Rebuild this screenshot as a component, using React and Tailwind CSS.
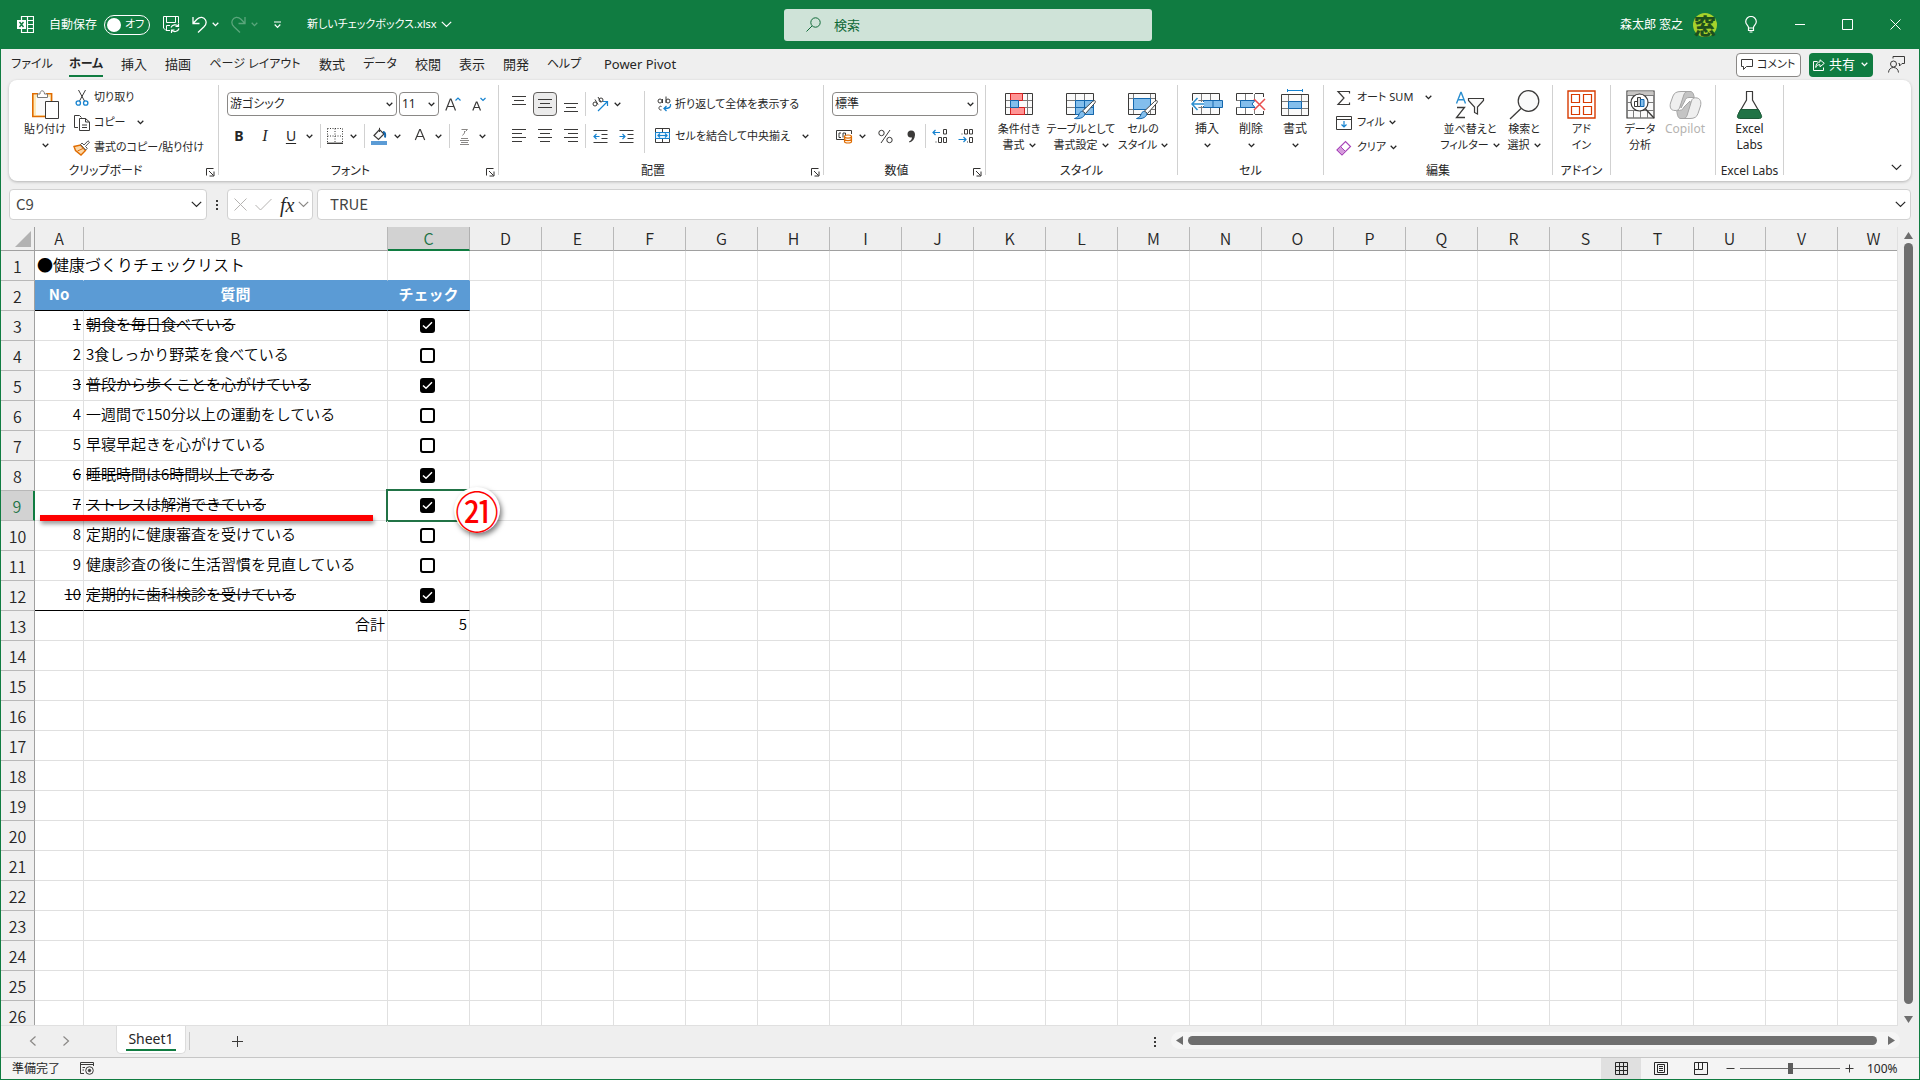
import React from "react";

const UI = "font-['Noto_Sans','Noto_Sans_CJK_JP',sans-serif] [font-feature-settings:'palt']";
const SHEET = "font-['Noto_Sans_CJK_JP',sans-serif] [font-feature-settings:normal]";

/* ---------- small shared pieces ---------- */

function Svg({ w, h, children, className = "", stroke = "#3b3a39" }) {
  return (
    <svg
      width={w}
      height={h}
      viewBox={`0 0 ${w} ${h}`}
      fill="none"
      stroke={stroke}
      className={`shrink-0 ${className}`}
      aria-hidden="true"
    >
      {children}
    </svg>
  );
}

function Chevron({ className = "" }) {
  return (
    <svg width="7" height="5" viewBox="0 0 7 5" fill="none" stroke="currentColor" strokeWidth="1.3" className={`shrink-0 ${className}`} aria-hidden="true">
      <path d="M0.7 0.8 3.5 3.6 6.3 0.8" />
    </svg>
  );
}

function WideChevron({ className = "" }) {
  return (
    <svg width="11" height="7" viewBox="0 0 11 7" fill="none" stroke="currentColor" strokeWidth="1.2" className={`shrink-0 ${className}`} aria-hidden="true">
      <path d="M0.8 0.8 5.5 5.5 10.2 0.8" />
    </svg>
  );
}

function Launcher({ label }) {
  return (
    <button type="button" aria-label={label} className="flex h-3 w-4 items-end pl-1">
      <Svg w={9} h={9} stroke="#323130">
        <path d="M0.5 7.5V0.5H7.5M3 3 7.5 7.5M8 3.5V8H3.5" />
      </Svg>
    </button>
  );
}

function Group({ label, width, launcher, children }) {
  return (
    <section aria-label={label || "分析"} className={`flex h-[90px] shrink-0 flex-col border-r border-[#d1d1d1] ${width}`}>
      <div className="flex h-20 shrink-0">{children}</div>
      <div className="flex h-3 shrink-0 items-center">
        <div className="flex-1 whitespace-nowrap text-center text-xs leading-[14px]">{label}</div>
        {launcher && <Launcher label={`${label}の設定`} />}
      </div>
    </section>
  );
}

function Tool({ label, children, className = "w-6" }) {
  return (
    <button type="button" aria-label={label} className={`flex h-6 shrink-0 items-center justify-center ${className}`}>
      {children}
    </button>
  );
}

function Sep({ className = "h-6" }) {
  return <div className={`w-px shrink-0 bg-[#d1d1d1] ${className}`} />;
}

function Big({ icon, lines, chevron, chevronBelow, width, disabled, size = "text-xs leading-4" }) {
  return (
    <button
      type="button"
      disabled={disabled}
      className={`flex shrink-0 flex-col items-center whitespace-nowrap pt-[3px] disabled:text-[#b5b3b1] ${size} ${width}`}
    >
      <span className="flex h-[33px] items-center justify-center">{icon}</span>
      {lines.map((t, i) => (
        <span key={t} className="flex items-center gap-1">
          {t}
          {chevron && i === lines.length - 1 && <Chevron />}
        </span>
      ))}
      {chevronBelow && (
        <span className="flex h-4 items-center">
          <Chevron />
        </span>
      )}
    </button>
  );
}

const TIGHT = "text-[11px] leading-4";

function Row({ icon, label, chevron, gap = "ml-1" }) {
  return (
    <button type="button" className="flex h-[25px] items-center whitespace-nowrap text-[11px]">
      <span className="flex w-[21px] items-center">{icon}</span>
      {label}
      {chevron && <Chevron className={gap} />}
    </button>
  );
}

function Combo({ label, value, width }) {
  return (
    <label className={`relative flex h-6 shrink-0 items-center rounded border border-[#8a8886] bg-white ${width}`}>
      <span className="sr-only">{label}</span>
      <select className="h-full w-full appearance-none bg-transparent pl-0.5 text-xs leading-5 outline-none">
        <option>{value}</option>
      </select>
      <Chevron className="pointer-events-none absolute right-[3px]" />
    </label>
  );
}

/* ---------- ribbon icons ---------- */

const PasteIcon = () => (
  <Svg w={30} h={31}>
    <path d="M3 5.5H22V27.5H3Z" fill="#fde9b8" stroke="none" />
    <path d="M6 8H20V26H6Z" fill="#fafafa" stroke="none" />
    <path d="M15 27.5H2.8V4.8H8M16 4.8H21.6V12" stroke="#e06c00" strokeWidth="1.6" />
    <path d="M7.5 8.5V5H10C10 2.8 11 1.8 12.2 1.8S14.5 2.8 14.5 5H17.5V8.5Z" fill="#fff" stroke="#7a7a7a" />
    <path d="M15.5 12.5H28.5V29.5H15.5Z" fill="#fff" />
  </Svg>
);

const CutIcon = () => (
  <Svg w={18} h={18}>
    <path d="M5.5 1 11.5 12M12.5 1 6.5 12" />
    <circle cx="5.3" cy="14" r="2.2" stroke="#1683d0" strokeWidth="1.3" />
    <circle cx="12.7" cy="14" r="2.2" stroke="#1683d0" strokeWidth="1.3" />
  </Svg>
);

const CopyIcon = () => (
  <Svg w={18} h={18}>
    <path d="M5 13.5H1.5V1.5H6.5L8.5 3.5M6.5 4.5H12.5L16.5 8V16.5H6.5ZM12.5 4.5V8H16.5M9 11H14M9 13.5H14" />
  </Svg>
);

const PainterIcon = () => (
  <Svg w={18} h={17}>
    <path d="M1 7.5 7.5 6 12.5 11.5 8 16 2.5 11.5Z" fill="#fbd7a8" stroke="#e06c00" strokeWidth="1.4" />
    <path d="M4.5 12 10 9.5" stroke="#e06c00" />
    <path d="M7.5 5.5 9 4 11 6 15 1.8 16.5 3.2 12.5 7.5 14.3 9.3 12.7 11Z" fill="#fff" stroke="#555" />
  </Svg>
);

const Lines = ({ w = 16, rows }) => (
  <Svg w={w} h={16}>
    <path d={rows.map(([x1, x2, y]) => `M${x1} ${y}H${x2}`).join("")} strokeWidth="1" />
  </Svg>
);

const TableBase = () => (
  <>
    <path d="M1.5 4.5H28.5V25.5H1.5Z" fill="#fafafa" stroke="#3b3a39" />
    <path d="M2 11.5H28M2 18.5H28M10.5 5V25M19.5 5V25" stroke="#7a7a7a" />
  </>
);

const Brush = () => (
  <>
    <path d="M14 25.5C15 22 18 21.5 20 23.5 20.5 27.5 16 30.5 9.5 29.5 12 28.8 13.2 27.8 14 25.5Z" fill="#83beec" stroke="#1467ad" />
    <path d="M17.5 22 27.5 12.5C30 10.8 31.2 11.8 29.8 14L20.5 24.5Z" fill="#fff" stroke="#444" />
  </>
);

const CondIcon = () => (
  <Svg w={30} h={31}>
    <path d="M1.5 4.5H28.5V25.5H1.5Z" fill="#fafafa" />
    <path d="M2 11.5H28M2 18.5H28M6.5 5V25M23.5 5V25" stroke="#7a7a7a" />
    <path d="M6.5 4.5H18.5V11.5H6.5ZM6.5 18.5H20.5V25.5H6.5Z" fill="#ff9494" stroke="#d62020" />
    <path d="M6.5 11.5H14.5V18.5H6.5Z" fill="#83beec" stroke="#1467ad" />
  </Svg>
);

const FormatTableIcon = () => (
  <Svg w={32} h={31}>
    <TableBase />
    <path d="M10.5 11.5H28.5V25.5H10.5Z" fill="#83beec" stroke="#1467ad" />
    <path d="M10.5 18.5H28M19.5 12V25" stroke="#1467ad" />
    <Brush />
  </Svg>
);

const CellStyleIcon = () => (
  <Svg w={32} h={31}>
    <path d="M1.5 4.5H28.5V25.5H1.5Z" fill="#fafafa" />
    <path d="M2 9.5H28M2 20.5H28M6.5 5V25M23.5 5V25" stroke="#7a7a7a" />
    <path d="M6.5 9.5H23.5V20.5H6.5Z" fill="#83beec" stroke="#1467ad" />
    <Brush />
  </Svg>
);

const InsertIcon = () => (
  <Svg w={33} h={31}>
    <TableBase />
    <path d="M12.5 11.5H31.5V18.5H12.5ZM22 11.5V18.5" fill="#83beec" stroke="#1467ad" />
    <path d="M1 15H13M6.5 9.5 1 15 6.5 20.5" stroke="#fff" strokeWidth="4" />
    <path d="M1 15H13M6.5 9 1 15 6.5 21" stroke="#2b8fd0" strokeWidth="1.6" />
  </Svg>
);

const DeleteIcon = () => (
  <Svg w={32} h={31}>
    <path d="M18 4.5H1.5V11.5H6M6 18.5H1.5V25.5H18M28.5 8V4.5H20M28.5 22V25.5H20" />
    <path d="M2 11.5H20M2 18.5H20M10.5 5V25M19.5 5V10M19.5 20V25" stroke="#7a7a7a" />
    <path d="M5.5 11.5H20L17 15 20 18.5H5.5Z" fill="#83beec" stroke="#1467ad" />
    <path d="M19 10 30 21M30 10 19 21" stroke="#e94f4f" strokeWidth="1.5" />
  </Svg>
);

const FormatIcon = () => (
  <Svg w={30} h={33}>
    <path d="M1.5 6.5H28.5V27.5H1.5Z" fill="#fafafa" />
    <path d="M2 13.5H28M2 20.5H28M8.5 7V27M21.5 7V27" stroke="#7a7a7a" />
    <path d="M8.5 13.5H21.5V20.5H8.5Z" fill="#83beec" stroke="#1467ad" />
    <path d="M7.5 2.5H22.5M7.5 1V4M22.5 1V4" stroke="#1683d0" />
  </Svg>
);

const SortIcon = () => (
  <Svg w={30} h={30}>
    <path d="M1.5 13.5 5.8 2.5H6.2L10.5 13.5M3 9.8H9" stroke="#2b8fd0" strokeWidth="1.4" />
    <path d="M2 17.5H9.5L1.5 27.5H10" strokeWidth="1.3" />
    <path d="M13.5 8.5H28.5V10.5L22.5 17V24L19.5 22.5V17L13.5 10.5Z" fill="#fafafa" strokeWidth="1.2" />
  </Svg>
);

const FindIcon = () => (
  <Svg w={31} h={31}>
    <circle cx="19.5" cy="12" r="10.3" fill="#fafafa" strokeWidth="1.2" />
    <path d="M12 19.5 1 30" strokeWidth="1.3" />
  </Svg>
);

const AddinIcon = () => (
  <Svg w={29} h={29} stroke="#d83b01">
    <path d="M1 1H28V28H1Z" strokeWidth="1.4" />
    <path d="M4.5 4.5H12.5V12.5H4.5ZM16.5 4.5H24.5V12.5H16.5ZM4.5 16.5H12.5V24.5H4.5ZM16.5 16.5H24.5V24.5H16.5Z" strokeWidth="1.2" />
  </Svg>
);

const AnalyzeIcon = () => (
  <Svg w={29} h={29}>
    <path d="M1 1H28V28H1Z" fill="#fafafa" strokeWidth="1.2" />
    <path d="M1.5 1.5H27.5V5H1.5Z" fill="#c8c6c4" stroke="none" />
    <path d="M1 5.5H28M1 12.5H28M1 20.5H28M7.5 20V28M14.5 20V28M21.5 20V28" stroke="#7a7a7a" />
    <circle cx="13.5" cy="12.5" r="8.5" fill="#fff" strokeWidth="1.2" />
    <path d="M19.5 19 28 28" strokeWidth="1.4" />
    <path d="M8.5 11.5H11.5V16.5H8.5Z" fill="#fff" />
    <path d="M11.5 7.5H14.5V16.5H11.5Z" fill="#ddd" />
    <path d="M14.5 9.5H18V16.5H14.5Z" fill="#83beec" stroke="#1467ad" />
  </Svg>
);

const CopilotIcon = () => (
  <Svg w={33} h={30} stroke="#a5a5a5">
    <path d="M21 1.5C24 1.5 24.5 4 25.3 7.5H20C17.5 7.5 16.5 9 15.8 11L12 18 11 10 14.5 3C15 2 16 1.5 17 1.5Z" fill="#c4c4c4" />
    <path d="M12 28.5C9 28.5 8.5 26 7.7 20.5 12 20.5 14 20 15 17L21 11 22 19 18.5 27C18 28 17 28.5 16 28.5Z" fill="#c4c4c4" />
    <path d="M12 1.5H18.5C16.5 1.5 15.5 3 14.8 5L10.5 18C9.8 20 8.5 20.5 6 20.5 1.5 20.5 0.5 17 1.5 13L4 6C5.2 3 7.5 1.5 12 1.5Z" fill="#efefef" />
    <path d="M21 28.5H14.5C16.5 28.5 17.5 27 18.2 25L22.5 11C23.2 8.5 24.5 7.8 26.5 7.8 31.5 7.8 32.5 12 31.5 16L29 23.5C27.8 27 25.5 28.5 21 28.5Z" fill="#efefef" />
  </Svg>
);

const FlaskIcon = () => (
  <Svg w={27} h={30}>
    <path d="M10 1.5H17M10.5 1.5V10L3 23M16.5 1.5V10L24 23" strokeWidth="1.2" />
    <path d="M4.5 19.5H22.5L25.5 25.5C26 27.5 25 28.5 23.5 28.5H3.5C2 28.5 1 27.5 1.5 25.5Z" fill="#217346" stroke="#1c5a38" />
  </Svg>
);

/* ---------- title bar ---------- */

function TitleBar() {
  return (
    <header className="flex h-[49px] shrink-0 items-center bg-[#107c41] text-xs text-white">
      <div className="flex flex-1 items-center">
        <Svg w={17} h={17} stroke="#fff" className="ml-4">
          <path d="M4.5 4V0.5H16.5V16.5H4.5V13M10.5 0.5V16.5M10 4.5H16M10 8.5H16M10 12.5H16" strokeWidth="1.2" />
          <path d="M0 4H9V13H0Z" fill="#fff" stroke="none" />
          <path d="M2.5 6 6.5 11M6.5 6 2.5 11" stroke="#107c41" strokeWidth="1.4" />
        </Svg>
        <span className="ml-[15px] w-[50px] whitespace-nowrap">自動保存</span>
        <button type="button" role="switch" aria-checked="false" aria-label="自動保存" className="ml-[5px] flex h-5 w-[46px] items-center whitespace-nowrap rounded-full border border-white px-0.5 text-[11px]">
          <span className="h-3.5 w-3.5 shrink-0 rounded-full bg-white" />
          <span className="ml-1">オフ</span>
        </button>
        <button type="button" aria-label="上書き保存" className="ml-[13px]">
          <Svg w={17} h={17} stroke="#fff">
            <path d="M7 14.5H3L0.5 12V0.5H15.5V7M3.5 0.5V6.5H12.5V0.5M3.5 14V9.5H7" />
            <path d="M8 11.5C9 8.5 13.5 8 15.5 10.5M15.5 7.5V10.5H12.5M16 12.5C15 16 10.5 16.5 8.5 14M8.5 17V14H11.5" strokeWidth="1.2" />
          </Svg>
        </button>
        <button type="button" aria-label="元に戻す" className="ml-3 flex items-center gap-[5px]">
          <Svg w={15} h={17} stroke="#fff">
            <path d="M1 1V7.5H7.5M1.2 7.2 5 3.2C8 0.5 12 1 13.5 4S13.8 9 12 10.8L6 16.5" strokeWidth="1.3" />
          </Svg>
          <Chevron />
        </button>
        <button type="button" disabled aria-label="やり直し" className="ml-3 flex items-center gap-[5px] text-[#5ba67c]">
          <Svg w={15} h={17} stroke="#5ba67c">
            <path d="M14 1V7.5H7.5M13.8 7.2 10 3.2C7 0.5 3 1 1.5 4S1.2 9 3 10.8L9 16.5" strokeWidth="1.3" />
          </Svg>
          <Chevron />
        </button>
        <button type="button" aria-label="クイック アクセス ツール バーのカスタマイズ" className="ml-[15px]">
          <Svg w={9} h={8} stroke="#fff">
            <path d="M1 1H8M1.7 3.5 4.5 6.3 7.3 3.5" strokeWidth="1.2" />
          </Svg>
        </button>
        <button type="button" className="ml-[25px] flex items-center gap-1 whitespace-nowrap text-[11px]">
          新しいチェックボックス.xlsx
          <WideChevron />
        </button>
      </div>
      <label className="ml-4 flex h-8 w-[368px] items-center rounded-[3px] bg-[#cfe3d8] pl-[22px]">
        <Svg w={15} h={15} stroke="#0f6a38">
          <circle cx="9.5" cy="5.5" r="4.7" />
          <path d="M6 9 0.5 14.5" />
        </Svg>
        <span className="sr-only">検索</span>
        <input type="search" placeholder="検索" className="ml-[13px] h-6 w-64 bg-transparent text-[13px] leading-6 outline-none placeholder:text-[#0f6a38]" />
      </label>
      <div className="flex flex-1 items-center justify-end">
        <span className="whitespace-nowrap">森太郎 窓之</span>
        <span className="ml-2.5 flex h-6 w-6 items-center justify-center rounded-full bg-[#a6d22b] text-[22px] font-black leading-6 text-[#1d4f1d]">窓</span>
        <button type="button" aria-label="ヒント" className="flex h-12 w-[68px] items-center justify-center">
          <Svg w={12} h={17} stroke="#fff">
            <path d="M3.5 11.5C3.5 9.5 0.7 8.5 0.7 5.7A5.3 5.2 0 0 1 11.3 5.7C11.3 8.5 8.5 9.5 8.5 11.5V14.5H3.5ZM3.5 12H8.5M4.5 16H7.5" strokeWidth="1.2" />
          </Svg>
        </button>
        <button type="button" aria-label="最小化" className="flex h-12 w-[30px] items-center justify-center">
          <Svg w={10} h={1} stroke="#fff"><path d="M0 0.5H10" /></Svg>
        </button>
        <button type="button" aria-label="最大化" className="ml-2 flex h-12 w-12 items-center justify-center">
          <Svg w={11} h={11} stroke="#fff"><path d="M0.5 0.5H10.5V10.5H0.5Z" /></Svg>
        </button>
        <button type="button" aria-label="閉じる" className="flex h-12 w-12 items-center justify-center">
          <Svg w={11} h={11} stroke="#fff"><path d="M0.5 0.5 10.5 10.5M10.5 0.5 0.5 10.5" /></Svg>
        </button>
      </div>
    </header>
  );
}

/* ---------- ribbon tabs ---------- */

const TABS = [
  ["ファイル", "w-14 text-xs"],
  ["ホーム", "w-[52px] text-xs font-bold"],
  ["挿入", "w-11 text-[13px]"],
  ["描画", "w-11 text-[13px]"],
  ["ページ レイアウト", "w-[110px] text-xs"],
  ["数式", "w-11 text-[13px]"],
  ["データ", "w-[52px] text-xs"],
  ["校閲", "w-11 text-[13px]"],
  ["表示", "w-11 text-[13px]"],
  ["開発", "w-11 text-[13px]"],
  ["ヘルプ", "w-[52px] text-xs"],
  ["Power Pivot", "w-[100px] text-[13px]"],
];

function TabRow() {
  return (
    <div className="flex h-[31px] shrink-0 items-center justify-between pl-[3px] pr-3.5">
      <nav className="flex h-full items-end">
        {TABS.map(([t, cls]) => (
          <button key={t} type="button" className={`flex h-[29px] justify-center whitespace-nowrap ${cls}`}>
            <span className={`h-[26px] border-b-2 leading-[26px] ${t === "ホーム" ? "border-[#107c41]" : "border-transparent"}`}>{t}</span>
          </button>
        ))}
      </nav>
      <div className="flex items-center">
        <button type="button" className="flex h-6 w-[65px] items-center gap-1 whitespace-nowrap rounded border border-[#8a8886] bg-white pl-1 text-[11px]">
          <Svg w={12} h={11}><path d="M0.5 0.5H11.5V7.5H5.5L2.5 10.5V7.5H0.5Z" /></Svg>
          コメント
        </button>
        <button type="button" className="ml-2 flex h-6 w-16 items-center gap-1 whitespace-nowrap rounded bg-[#107c41] pl-1 text-[13px] text-white">
          <Svg w={12} h={12} stroke="#fff">
            <path d="M4.5 2.5H0.5V11.5H10.5V8.5M7 0.8 11.3 4.3 7 7.8V5.7C4.5 5.7 3.5 6.5 2.8 8.5 2.8 5 4.5 3 7 2.9Z" />
          </Svg>
          共有
          <Chevron className="ml-0.5" />
        </button>
        <button type="button" aria-label="プレゼンス" className="ml-3.5 flex w-[18px] justify-center">
          <Svg w={17} h={17}>
            <circle cx="5.5" cy="8" r="3" />
            <path d="M0.5 16.5C0.8 13 3 11.5 5.5 11.5S10.2 13 10.5 16.5M5 2.5V0.5H16.5V7.5H14L11.5 10V7.5H10.5" />
          </Svg>
        </button>
      </div>
    </div>
  );
}

/* ---------- ribbon ---------- */

function Ribbon() {
  return (
    <div className="mx-2 flex h-[101px] shrink-0 items-start rounded-lg bg-white pt-[5px] shadow-[0_1px_3px_rgba(0,0,0,0.25)]">
      <Group label="クリップボード" width="w-[210px]" launcher>
        <Big width="w-16 pl-2" icon={<PasteIcon />} lines={["貼り付け"]} chevronBelow size={TIGHT} />
        <div className="flex flex-col">
          <Row icon={<CutIcon />} label="切り取り" />
          <Row icon={<CopyIcon />} label="コピー" chevron gap="ml-[11px]" />
          <Row icon={<PainterIcon />} label="書式のコピー/貼り付け" />
        </div>
      </Group>

      <Group label="フォント" width="w-[280px]" launcher>
        <div className="flex flex-col gap-2 pl-2 pt-[7px]">
          <div className="flex items-center gap-0.5">
            <Combo label="フォント" value="游ゴシック" width="w-[170px]" />
            <Combo label="フォント サイズ" value="11" width="w-10" />
            <Tool label="フォント サイズの拡大">
              <Svg w={16} h={16}>
                <path d="M0.8 14.5 5.3 3H6L10.5 14.5M2.5 10.5H8.8" strokeWidth="1.2" />
                <path d="M10.5 4.5 13 2 15.5 4.5" stroke="#1683d0" strokeWidth="1.2" />
              </Svg>
            </Tool>
            <Tool label="フォント サイズの縮小">
              <Svg w={14} h={16}>
                <path d="M0.8 14.5 4.3 6H5L8.5 14.5M2 11.5H7.3" strokeWidth="1.2" />
                <path d="M8.5 2 11 4.5 13.5 2" stroke="#1683d0" strokeWidth="1.2" />
              </Svg>
            </Tool>
          </div>
          <div className="flex items-center">
            <Tool label="太字"><b className="text-sm">B</b></Tool>
            <Tool label="斜体" className="ml-0.5 w-6"><i className="font-['Liberation_Serif',serif] text-base">I</i></Tool>
            <Tool label="下線" className="ml-0.5 w-6"><u className="text-sm underline-offset-2">U</u></Tool>
            <Tool label="下線の種類" className="w-3"><Chevron /></Tool>
            <Sep className="ml-[5px] h-6" />
            <Tool label="罫線" className="ml-0.5 w-6">
              <Svg w={16} h={16}>
                <path d="M0.5 0.5H15.5M0.5 0.5V15M15.5 0.5V15M8 0.5V15M0.5 8H15.5" strokeDasharray="1 1.5" />
                <path d="M0 15.3H16" strokeWidth="1.4" />
              </Svg>
            </Tool>
            <Tool label="罫線の種類" className="w-3"><Chevron /></Tool>
            <Sep className="ml-[5px] h-6" />
            <Tool label="塗りつぶしの色" className="ml-0.5 w-6">
              <Svg w={17} h={18}>
                <path d="M3 8.5 8.5 2.5 13 7 7.5 12.5Z" fill="#fafafa" strokeWidth="1.2" />
                <path d="M8.5 5V0.8" />
                <path d="M12 5C14 5 14.5 7 14 10.5" stroke="#1467ad" strokeWidth="2" />
                <path d="M0 14H16V18H0Z" fill="#5b9bd5" stroke="none" />
              </Svg>
            </Tool>
            <Tool label="塗りつぶしの種類" className="w-3"><Chevron /></Tool>
            <Tool label="フォントの色" className="ml-[5px] w-6">
              <Svg w={12} h={18}>
                <path d="M1.3 13 5.7 2.5H6.3L10.7 13M3 9.5H9" strokeWidth="1.2" />
              </Svg>
            </Tool>
            <Tool label="フォントの色の種類" className="w-3"><Chevron /></Tool>
            <Sep className="ml-[5px] h-6" />
            <Tool label="ふりがな" className="ml-0.5 w-6">
              <Svg w={9} h={17} stroke="#8a8886">
                <path d="M1.5 1.5H7.5L5.5 3.5M4.5 3V5L2.5 7.5M1 10.5H8M0 12.5H9M1 14.5H8M0 16.5H9" />
              </Svg>
            </Tool>
            <Tool label="ふりがなの種類" className="w-3"><Chevron /></Tool>
          </div>
        </div>
      </Group>

      <Group label="配置" width="w-[325px]" launcher>
        <div className="flex flex-col gap-2 pl-2 pt-[7px]">
          <div className="flex items-center gap-0.5">
            <Tool label="上揃え"><Lines rows={[[1, 15, 0.5], [3, 13, 4.5], [1, 15, 8.5]]} /></Tool>
            <Tool label="上下中央揃え" className="w-6 rounded border border-[#605e5c] bg-[#ebebeb]"><Lines rows={[[1, 15, 3.5], [3, 13, 7.5], [1, 15, 11.5]]} /></Tool>
            <Tool label="下揃え"><Lines rows={[[1, 15, 7.5], [3, 13, 11.5], [1, 15, 15.5]]} /></Tool>
            <Sep />
            <Tool label="方向">
              <Svg w={17} h={17}>
                <circle cx="3" cy="8" r="2" />
                <path d="M3 3.5 6 8.5M6 1 9 6" />
                <circle cx="9" cy="4" r="2" />
                <path d="M6 15 15 6M11 5.5H15.5V10" stroke="#1683d0" strokeWidth="1.2" />
              </Svg>
            </Tool>
            <Chevron />
          </div>
          <div className="flex items-center gap-0.5">
            <Tool label="左揃え"><Lines rows={[[1, 15, 1.5], [1, 11, 5.5], [1, 15, 9.5], [1, 11, 13.5]]} /></Tool>
            <Tool label="中央揃え"><Lines rows={[[1, 15, 1.5], [3, 13, 5.5], [1, 15, 9.5], [3, 13, 13.5]]} /></Tool>
            <Tool label="右揃え"><Lines rows={[[1, 15, 1.5], [5, 15, 5.5], [1, 15, 9.5], [5, 15, 13.5]]} /></Tool>
            <Sep />
            <Tool label="インデントを減らす">
              <Svg w={15} h={15}>
                <path d="M0.5 1.5H14.5M8.5 5.5H14.5M8.5 9.5H14.5M0.5 13.5H14.5" />
                <path d="M1 7.5H6.5M3.5 5 1 7.5 3.5 10" stroke="#1683d0" strokeWidth="1.2" />
              </Svg>
            </Tool>
            <Tool label="インデントを増やす">
              <Svg w={15} h={15}>
                <path d="M0.5 1.5H14.5M8.5 5.5H14.5M8.5 9.5H14.5M0.5 13.5H14.5" />
                <path d="M0.5 7.5H6M3.5 5 6 7.5 3.5 10" stroke="#1683d0" strokeWidth="1.2" />
              </Svg>
            </Tool>
          </div>
        </div>
        <Sep className="ml-1.5 mt-1.5 h-[62px]" />
        <div className="flex flex-col gap-2 pl-2.5 pt-[7px]">
          <button type="button" className="flex h-6 items-center whitespace-nowrap text-[11px]">
            <span className="w-5 pl-0.5">
              <Svg w={15} h={16}>
                <circle cx="3" cy="5" r="2" />
                <path d="M5.5 3V7M9 0.5V7M4.5 10.5C1.5 9 0.8 14.5 4.5 14" />
                <circle cx="11" cy="5" r="2" />
                <path d="M13.5 8C14 11 13 12.5 7 12.5M9.5 10 7 12.5 9.5 15" stroke="#1683d0" strokeWidth="1.3" />
              </Svg>
            </span>
            折り返して全体を表示する
          </button>
          <button type="button" className="flex h-6 items-center whitespace-nowrap text-[11px]">
            <span className="w-5">
              <Svg w={16} h={16}>
                <path d="M0.5 0.5H14.5V14.5H0.5ZM7.5 0.5V4M7.5 11V14.5" />
                <path d="M0.5 4.5H14.5V10.5H0.5Z" fill="#e8f3fb" stroke="#1683d0" />
                <path d="M3 7.5H12M5 5.5 3 7.5 5 9.5M10 5.5 12 7.5 10 9.5" stroke="#1683d0" strokeWidth="1.2" />
              </Svg>
            </span>
            セルを結合して中央揃え
            <Chevron className="ml-3" />
          </button>
        </div>
      </Group>

      <Group label="数値" width="w-[162px]" launcher>
        <div className="flex flex-col gap-2 pl-2 pt-[7px]">
          <Combo label="表示形式" value="標準" width="w-[146px]" />
          <div className="flex items-center">
            <Tool label="通貨表示形式">
              <Svg w={17} h={16}>
                <path d="M15.5 6V2.5H0.5V11.5H8M5 5H3V9.5H5M7 9.5V5H9.5V7" />
                <path d="M8.5 8.5C8.5 6.5 15.5 6.5 15.5 8.5V13.5C15.5 15.5 8.5 15.5 8.5 13.5ZM8.5 9C10 10.5 14 10.5 15.5 9M8.5 11.5C10 13 14 13 15.5 11.5" fill="#fff" stroke="#e06c00" strokeWidth="1.2" />
              </Svg>
            </Tool>
            <Tool label="通貨の種類" className="w-3"><Chevron /></Tool>
            <Tool label="パーセント" className="ml-[5px] w-6">
              <Svg w={15} h={15}>
                <circle cx="3.5" cy="4" r="2.7" /><circle cx="11.5" cy="11" r="2.7" /><path d="M12 1 3 14" />
              </Svg>
            </Tool>
            <Tool label="桁区切り" className="ml-0.5 w-6">
              <Svg w={9} h={13}>
                <path d="M4 0.5C7 0.5 8.2 2.5 8 5 7.8 9 5.5 11.5 2.5 12.5L2 11.5C4 10.5 5 9 5 7.5 1.5 8 0.5 6 0.5 4 0.5 2 2 0.5 4 0.5Z" fill="#3b3a39" stroke="none" />
              </Svg>
            </Tool>
            <Sep className="ml-0.5 h-6" />
            <Tool label="小数点以下の表示桁数を増やす" className="ml-0.5 w-6">
              <Svg w={16} h={16}>
                <path d="M1 4.5H8M3.5 2 1 4.5 3.5 7" stroke="#1683d0" strokeWidth="1.2" />
                <path d="M11.5 1.5H14.5V6H11.5ZM6.5 9.5H9.5V14.5H6.5ZM11.5 9.5H14.5V14.5H11.5ZM3.5 14H4.5" />
              </Svg>
            </Tool>
            <Tool label="小数点以下の表示桁数を減らす" className="ml-0.5 w-6">
              <Svg w={16} h={16}>
                <path d="M0.5 11.5H8M5.5 9 8 11.5 5.5 14" stroke="#1683d0" strokeWidth="1.2" />
                <path d="M6.5 1.5H9.5V6H6.5ZM11.5 1.5H14.5V6H11.5ZM3.5 6H4.5M11.5 9.5H14.5V14.5H11.5ZM9 14H10" />
              </Svg>
            </Tool>
          </div>
        </div>
      </Group>

      <Group label="スタイル" width="w-[192px]">
        <Big width="w-[62px] ml-0.5" icon={<CondIcon />} lines={["条件付き", "書式"]} chevron size={TIGHT} />
        <Big width="w-[62px]" icon={<FormatTableIcon />} lines={["テーブルとして", "書式設定"]} chevron size={TIGHT} />
        <Big width="w-[62px]" icon={<CellStyleIcon />} lines={["セルの", "スタイル"]} chevron size={TIGHT} />
      </Group>

      <Group label="セル" width="w-[146px]">
        <Big width="ml-[7px] w-11" icon={<InsertIcon />} lines={["挿入"]} chevronBelow />
        <Big width="w-11" icon={<DeleteIcon />} lines={["削除"]} chevronBelow />
        <Big width="w-11" icon={<FormatIcon />} lines={["書式"]} chevronBelow />
      </Group>

      <Group label="編集" width="w-[229px]">
        <div className="flex w-[118px] shrink-0 flex-col pl-3">
          <Row
            icon={<Svg w={16} h={16}><path d="M13.5 3.5V1.5H2L8 8 2 14.5H13.5V12.5" strokeWidth="1.2" /></Svg>}
            label="オート SUM" chevron gap="ml-3"
          />
          <Row
            icon={<Svg w={16} h={16}><path d="M0.5 1.5H15.5V14.5H0.5ZM0.5 4.5H15.5" /><path d="M8 6V12M5.5 9.5 8 12 10.5 9.5" stroke="#1683d0" strokeWidth="1.2" /></Svg>}
            label="フィル" chevron
          />
          <Row
            icon={<Svg w={16} h={16} stroke="#a846b9"><path d="M1 10 9.5 1.5 14.5 6.5 6 15Z" strokeWidth="1.2" fill="#fff" /><path d="M1 10 4.5 6.5 9.5 11.5 6 15Z" fill="#d59bdc" /></Svg>}
            label="クリア" chevron
          />
        </div>
        <Big width="w-[56px]" icon={<SortIcon />} lines={["並べ替えと", "フィルター"]} chevron size={TIGHT} />
        <Big width="w-[52px]" icon={<FindIcon />} lines={["検索と", "選択"]} chevron size={TIGHT} />
      </Group>

      <Group label="アドイン" width="w-[58px]">
        <Big width="w-[57px]" icon={<AddinIcon />} lines={["アド", "イン"]} size={TIGHT} />
      </Group>

      <Group label="" width="w-[105px]">
        <Big width="ml-[7px] w-11" icon={<AnalyzeIcon />} lines={["データ", "分析"]} size={TIGHT} />
        <Big width="w-[46px]" icon={<CopilotIcon />} lines={["Copilot"]} disabled />
      </Group>

      <Group label="Excel Labs" width="w-[68px]">
        <Big width="w-[67px]" icon={<FlaskIcon />} lines={["Excel", "Labs"]} />
      </Group>

      <button type="button" aria-label="リボンを折りたたむ" className="ml-auto mr-[9px] mt-[79px]">
        <WideChevron />
      </button>
    </div>
  );
}

/* ---------- formula bar ---------- */

function Dots() {
  return (
    <Svg w={2} h={12} stroke="none">
      <path d="M0 1H2V3H0ZM0 5H2V7H0ZM0 9H2V11H0Z" fill="#3b3a39" />
    </Svg>
  );
}

function FormulaBar() {
  const box = "flex h-[31px] shrink-0 items-center rounded border border-[#d1d1d1] bg-white";
  return (
    <div className="mx-2 mt-2 flex shrink-0 items-center">
      <label className={`${box} w-[198px] pr-1`}>
        <span className="sr-only">名前ボックス</span>
        <input defaultValue="C9" className={`min-w-0 flex-1 pl-1.5 text-[15px] outline-none ${SHEET} text-[#444]`} />
        <WideChevron />
      </label>
      <span className="flex w-5 justify-center"><Dots /></span>
      <div className={`${box} w-[86px] gap-2 pl-1.5`}>
        <button type="button" disabled aria-label="キャンセル">
          <Svg w={13} h={13} stroke="#b5b3b1"><path d="M0.5 0.5 12.5 12.5M12.5 0.5 0.5 12.5" /></Svg>
        </button>
        <button type="button" disabled aria-label="入力">
          <Svg w={17} h={13} stroke="#b5b3b1"><path d="M0.5 7 5.5 12 16.5 1" /></Svg>
        </button>
        <button type="button" aria-label="関数の挿入" className="flex items-center gap-1 text-[#8a8886]">
          <i className="font-['Liberation_Serif',serif] text-xl leading-5 text-[#262626]">fx</i>
          <WideChevron />
        </button>
      </div>
      <label className="ml-1 flex h-[31px] flex-1 items-center rounded border border-[#d1d1d1] bg-white pr-1">
        <span className="sr-only">数式バー</span>
        <input defaultValue="TRUE" className={`min-w-0 flex-1 pl-3 text-[15px] outline-none ${SHEET} text-[#444]`} />
        <WideChevron />
      </label>
    </div>
  );
}

/* ---------- worksheet ---------- */

const COLS = "ABCDEFGHIJKLMNOPQRSTUVW".split("");
const ROW_NUMBERS = Array.from({ length: 26 }, (_, i) => i + 1);

const ITEMS = [
  ["朝食を毎日食べている", true],
  ["3食しっかり野菜を食べている", false],
  ["普段から歩くことを心がけている", true],
  ["一週間で150分以上の運動をしている", false],
  ["早寝早起きを心がけている", false],
  ["睡眠時間は6時間以上である", true],
  ["ストレスは解消できている", true],
  ["定期的に健康審査を受けている", false],
  ["健康診査の後に生活習慣を見直している", false],
  ["定期的に歯科検診を受けている", true],
];

function CellCheck({ checked, label }) {
  return (
    <label className="relative mx-auto block h-[15px] w-[15px]">
      <span className="sr-only">{label}</span>
      <input type="checkbox" defaultChecked={checked} className="peer block h-[15px] w-[15px] appearance-none rounded-[3px] border-2 border-black bg-white checked:bg-black" />
      <svg width="15" height="15" viewBox="0 0 15 15" fill="none" stroke="#fff" strokeWidth="1.5" className="pointer-events-none absolute inset-0 hidden peer-checked:block" aria-hidden="true">
        <path d="M3 7.5 6 10.3 12 4.3" />
      </svg>
    </label>
  );
}

function cellText(row, col) {
  if (row === 1 && col === "A") return "●健康づくりチェックリスト";
  if (row === 2) return { A: "No", B: "質問", C: "チェック" }[col];
  if (row === 13) return { B: "合計", C: "5" }[col];
  if (row >= 3 && row <= 12) {
    if (col === "A") return String(row - 2);
    if (col === "B") return ITEMS[row - 3][0];
  }
  return null;
}

function Cell({ row, col }) {
  const inTable = col === "A" || col === "B" || col === "C";
  const item = row >= 3 && row <= 12 ? ITEMS[row - 3] : null;
  const isCheck = item && col === "C";
  const cls = ["relative h-[30px] whitespace-nowrap border-b border-r leading-5"];
  cls.push(row === 1 ? "text-base" : "text-[15px]");
  cls.push(isCheck ? "pl-0.5 pr-1 py-0" : "px-0.5 pt-0 pb-[3px]");
  if (row === 2 && inTable) {
    cls.push("border-b-black border-r-[#5b9bd5] bg-[#5b9bd5] text-center font-bold text-white");
  } else {
    if (row === 1 && inTable) cls.push("border-b-[#5b9bd5]");
    else if (row === 12 && inTable) cls.push("border-b-black");
    else cls.push("border-b-[#e0e0e0]");
    cls.push(row === 1 && col === "A" ? "border-r-transparent" : "border-r-[#e0e0e0]");
    if ((row > 2 && col === "A") || row === 13) cls.push("text-right");
  }
  const struck = item && item[1] && (col === "A" || col === "B");
  const text = cellText(row, col);
  return (
    <td className={cls.join(" ")}>
      {text && <span className={struck ? "line-through decoration-1" : ""}>{text}</span>}
      {isCheck && <CellCheck checked={item[1]} label={item[0]} />}
      {row === 9 && col === "A" && (
        <span className="absolute left-[5px] top-6 z-10 h-1.5 w-[333px] bg-[#fe0000] shadow-[1px_3px_4px_rgba(0,0,0,0.4)]" />
      )}
      {row === 9 && col === "C" && (
        <>
          <span className="absolute -inset-x-0.5 -inset-y-0.5 border-2 border-[#217346]" />
          <span className="absolute -top-1 left-[66px] z-10 flex h-[46px] w-[46px] items-center justify-center rounded-full bg-white text-[44px] font-normal leading-none text-[#fe0000] shadow-[2px_3px_5px_rgba(0,0,0,0.5)]">
            ㉑
          </span>
        </>
      )}
    </td>
  );
}

function Sheet() {
  return (
    <div className="min-w-0 flex-1 overflow-hidden border-b border-r border-[#e0e0e0] bg-white">
      <table className={`w-[1909px] table-fixed border-separate border-spacing-0 font-[350] text-black ${SHEET}`}>
        <colgroup>
          <col className="w-[34px]" />
          <col className="w-[49px]" />
          <col className="w-[304px]" />
          <col className="w-[82px]" />
          {COLS.slice(3).map((c) => (
            <col key={c} className="w-[72px]" />
          ))}
        </colgroup>
        <thead>
          <tr className="bg-[#efefef]">
            <th className="h-6 border-b border-r border-[#a0a0a0] p-0">
              <svg width="16" height="16" viewBox="0 0 16 16" className="ml-auto mr-[3px]" aria-hidden="true">
                <path d="M16 0V16H0Z" fill="#b2b2b2" />
              </svg>
            </th>
            {COLS.map((c) => (
              <th
                key={c}
                scope="col"
                className={`h-6 border-r p-0 pb-px text-base font-[350] leading-5 ${
                  c === "C"
                    ? "border-b-2 border-b-[#107c41] border-r-[#b0b0b0] bg-[#d2d2d2] text-[#217346]"
                    : "border-b border-b-[#a0a0a0] border-r-[#b8b8b8] text-[#262626]"
                }`}
              >
                {c}
              </th>
            ))}
          </tr>
        </thead>
        <tbody>
          {ROW_NUMBERS.map((r) => (
            <tr key={r}>
              <th
                scope="row"
                className={`h-[30px] border-b border-b-[#b8b8b8] p-0 pt-px text-center text-base font-[350] leading-5 ${
                  r === 9
                    ? "border-r-2 border-r-[#107c41] bg-[#d2d2d2] text-[#217346]"
                    : "border-r border-r-[#a0a0a0] bg-[#efefef] text-[#262626]"
                }`}
              >
                {r}
              </th>
              {COLS.map((c) => (
                <Cell key={c} row={r} col={c} />
              ))}
            </tr>
          ))}
        </tbody>
      </table>
    </div>
  );
}

function VerticalScroll() {
  return (
    <div className="flex w-[21px] shrink-0 flex-col items-center pb-[3px] pt-[5px]">
      <Svg w={9} h={7} stroke="none" className="mb-1"><path d="M4.5 0 9 7H0Z" fill="#6e6e6e" /></Svg>
      <div className="w-[9px] flex-1 rounded-full bg-[#6e6e6e]" />
      <Svg w={9} h={7} stroke="none" className="mt-3"><path d="M0 0H9L4.5 7Z" fill="#6e6e6e" /></Svg>
    </div>
  );
}

/* ---------- sheet tabs and status bar ---------- */

function SheetTabs() {
  return (
    <div className="flex h-8 shrink-0 items-start border-b border-[#c6c6c6]">
      <button type="button" aria-label="前のシート" className="ml-7 mt-2.5">
        <Svg w={8} h={10} stroke="#8a8886"><path d="M6.5 0.5 1.5 5 6.5 9.5" strokeWidth="1.2" /></Svg>
      </button>
      <button type="button" aria-label="次のシート" className="ml-[25px] mt-2.5">
        <Svg w={8} h={10} stroke="#8a8886"><path d="M1.5 0.5 6.5 5 1.5 9.5" strokeWidth="1.2" /></Svg>
      </button>
      <button type="button" className="ml-[46px] flex h-7 w-[70px] justify-center rounded-b-[5px] border-x border-b border-[#dcdcdc] bg-white text-sm">
        <span className="h-[25px] border-b-2 border-[#107c41] px-0.5 leading-[25px]">Sheet1</span>
      </button>
      <div className="ml-[3px] mt-1.5 h-[18px] w-px bg-[#c8c8c8]" />
      <button type="button" aria-label="新しいシート" className="ml-[42px] mt-2.5">
        <Svg w={11} h={11}><path d="M5.5 0V11M0 5.5H11" /></Svg>
      </button>
      <div className="ml-auto mt-2.5"><Dots /></div>
      <div className="ml-[15px] mr-[19px] mt-1.5 flex h-[17px] w-[729px] items-center rounded-full bg-[#f5f5f5] px-[5px]">
        <Svg w={7} h={9} stroke="none"><path d="M7 0V9L0 4.5Z" fill="#6e6e6e" /></Svg>
        <div className="ml-[5px] mr-[11px] h-[9px] flex-1 rounded-full bg-[#6e6e6e]" />
        <Svg w={7} h={9} stroke="none"><path d="M0 0V9L7 4.5Z" fill="#6e6e6e" /></Svg>
      </div>
    </div>
  );
}

function StatusBar() {
  return (
    <footer className="flex h-[21px] shrink-0 items-center bg-[#f4f4f4] text-xs">
      <span className="ml-[11px] whitespace-nowrap">準備完了</span>
      <button type="button" aria-label="マクロの記録" className="ml-5">
        <Svg w={15} h={13}>
          <path d="M4 11.5H0.5V0.5H13.5V4M0.5 2.5H13.5M2.5 5.5H5M2.5 8H4" />
          <circle cx="9.5" cy="8.5" r="3.8" /><circle cx="9.5" cy="8.5" r="1.2" fill="#3b3a39" />
        </Svg>
      </button>
      <button type="button" aria-label="標準" className="ml-auto flex h-full w-10 items-center justify-center bg-[#e0e0e0]">
        <Svg w={13} h={13} stroke="#262626"><path d="M0.5 0.5H12.5V12.5H0.5ZM4.5 0V13M8.5 0V13M0 4.5H13M0 8.5H13" /></Svg>
      </button>
      <button type="button" aria-label="ページ レイアウト" className="flex h-full w-10 items-center justify-center">
        <Svg w={14} h={13} stroke="#262626"><path d="M0.5 0.5H13.5V12.5H0.5ZM3.5 2.5H10.5V10.5H3.5ZM5 4.5H9M5 6.5H9M5 8.5H9" /></Svg>
      </button>
      <button type="button" aria-label="改ページ プレビュー" className="flex h-full w-10 items-center justify-center">
        <Svg w={14} h={13} stroke="#262626"><path d="M0.5 0.5H13.5V12.5H0.5ZM4.5 0.5V7.5H0.5M4.5 7.5H8.5V0.5" /></Svg>
      </button>
      <button type="button" aria-label="縮小" className="ml-[5px]">
        <Svg w={9} h={9}><path d="M0.5 4.5H8.5" /></Svg>
      </button>
      <label className="ml-[5px] flex items-center">
        <span className="sr-only">ズーム</span>
        <input
          type="range"
          defaultValue="50"
          className="h-3 w-[100px] appearance-none bg-transparent [&::-webkit-slider-runnable-track]:h-px [&::-webkit-slider-runnable-track]:bg-[#6e6e6e] [&::-webkit-slider-thumb]:-mt-[5px] [&::-webkit-slider-thumb]:h-[11px] [&::-webkit-slider-thumb]:w-[5px] [&::-webkit-slider-thumb]:appearance-none [&::-webkit-slider-thumb]:bg-[#5c5c5c]"
        />
      </label>
      <button type="button" aria-label="拡大" className="ml-[5px]">
        <Svg w={9} h={9}><path d="M0.5 4.5H8.5M4.5 0.5V8.5" /></Svg>
      </button>
      <span className="ml-[13px] w-[52px]">100%</span>
    </footer>
  );
}

export default function App() {
  return (
    <div className={`flex h-screen flex-col overflow-hidden border-x border-b border-[#107c41] bg-[#efefef] text-[#262626] ${UI}`}>
      <TitleBar />
      <TabRow />
      <Ribbon />
      <FormulaBar />
      <main className="mt-[7px] flex min-h-0 flex-1">
        <Sheet />
        <VerticalScroll />
      </main>
      <SheetTabs />
      <StatusBar />
    </div>
  );
}
